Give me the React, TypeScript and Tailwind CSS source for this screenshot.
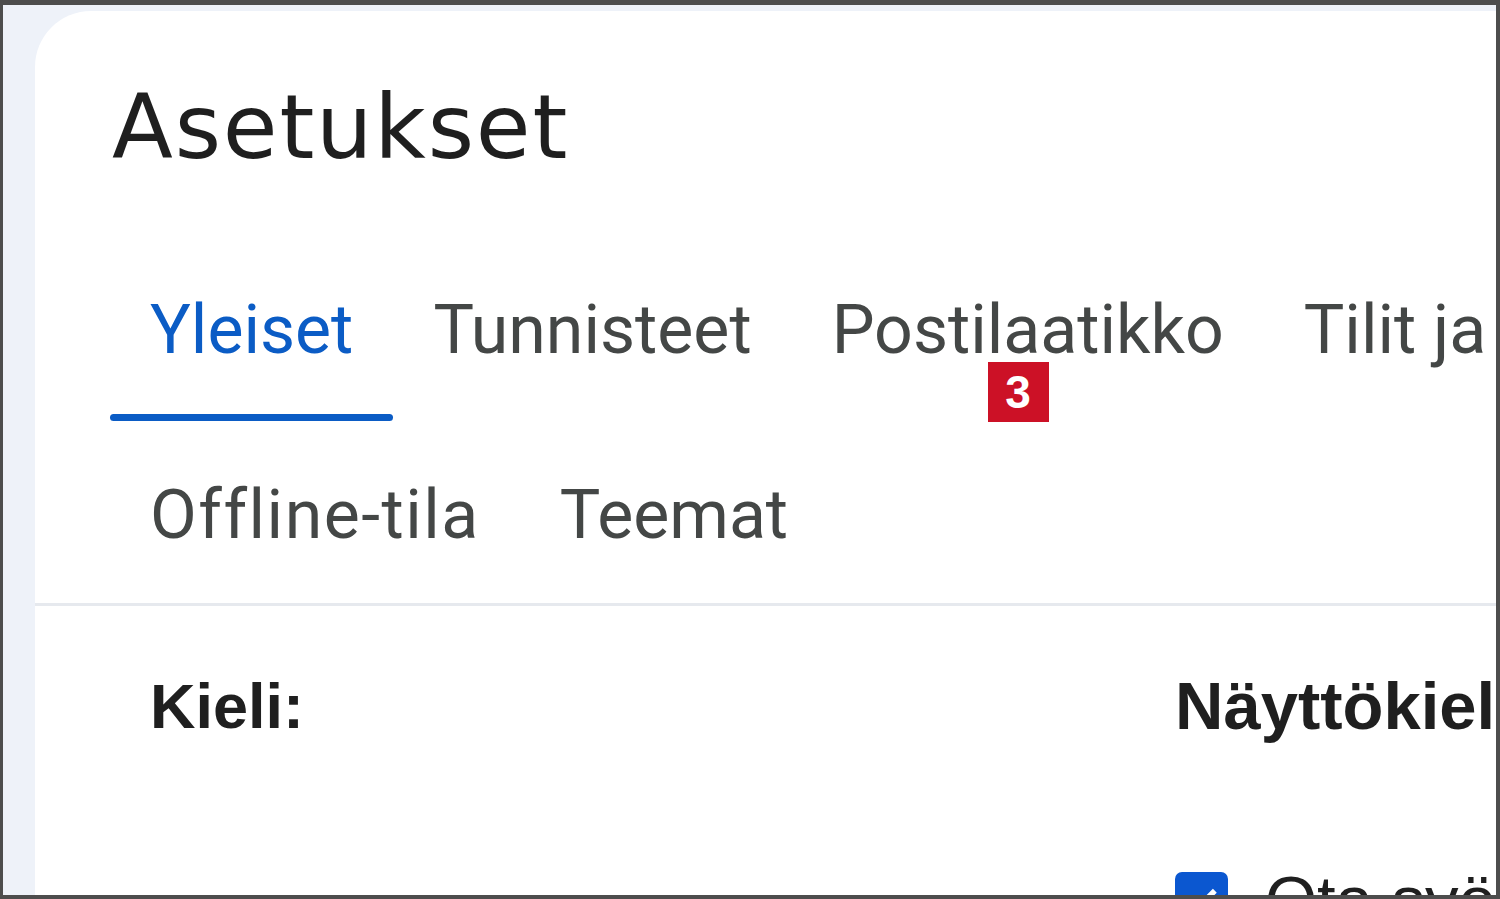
import React from "react";

const tabs = ["Yleiset", "Tunnisteet", "Postilaatikko", "Tilit ja tuonti", "Suodattimet"];

const App = () => {
  return (
    <div className="w-[1500px] h-[899px] overflow-hidden border-t-[5px] border-l-[3px] border-r-[4px] border-b-[4px] border-[#4d4d4d] bg-[#eef2f9]">
      <div className="h-full pl-[32px] pt-[6px]">
        <div className="h-full bg-white rounded-tl-[56px] overflow-hidden">
          <div className="pl-[77px] pt-[72px] font-['DejaVu_Sans',sans-serif] text-[89px] leading-none text-[#1f1f1f] tracking-[1.8px]">
            Asetukset
          </div>

          <div className="pl-[75px] pt-[124px] font-['Roboto',sans-serif] text-[68px] leading-none [font-variant-ligatures:none]">
            <div className="flex whitespace-nowrap">
              {tabs.map((t, i) => (
                <div key={t} className="relative flex flex-col shrink-0">
                  <div className={`px-[40px] ${i === 0 ? "text-[#0b5cc5]" : "text-[#444746]"}`}>{t}</div>
                  <div className={`mt-[50px] h-[7px] rounded-full ${i === 0 ? "bg-[#0b5cc5]" : "bg-transparent"}`}></div>
                  {i === 2 && (
                    <div className="absolute left-[196px] top-[66px] w-[61px] h-[60px] bg-[#cc1126] flex items-center justify-center text-white font-['Liberation_Sans',sans-serif] font-bold text-[46px]">
                      3
                    </div>
                  )}
                </div>
              ))}
            </div>
            <div className="flex whitespace-nowrap mt-[60px] text-[#444746]">
              <div className="px-[40px] tracking-[1.5px]">Offline-tila</div>
              <div className="px-[40px]">Teemat</div>
            </div>
          </div>

          <div className="mt-[54px] h-[3px] bg-[#e6e9ee]"></div>

          <div className="flex pl-[115px] pt-[69px] font-['Liberation_Sans',sans-serif] font-bold leading-none text-[#1f1f1f] whitespace-nowrap">
            <div className="w-[1025px] shrink-0 text-[63px]">Kieli:</div>
            <div className="flex flex-col text-[67px] -mt-[3px]">
              <div>Näyttökieli:</div>
              <div className="flex items-start gap-[37px] mt-[133px] font-normal">
                <div className="w-[53px] h-[53px] rounded-[7px] bg-[#0b57d0] flex items-center justify-center shrink-0">
                  <svg viewBox="0 0 24 24" className="w-[44px] h-[44px]" fill="none" stroke="white" strokeWidth="3">
                    <path d="M5 12.5l4.5 4.5L19 7.5" />
                  </svg>
                </div>
                <div className="-mt-[6px]">Ota syöttötyökalut käyttöön</div>
              </div>
            </div>
          </div>
        </div>
      </div>
    </div>
  );
};

export default App;
